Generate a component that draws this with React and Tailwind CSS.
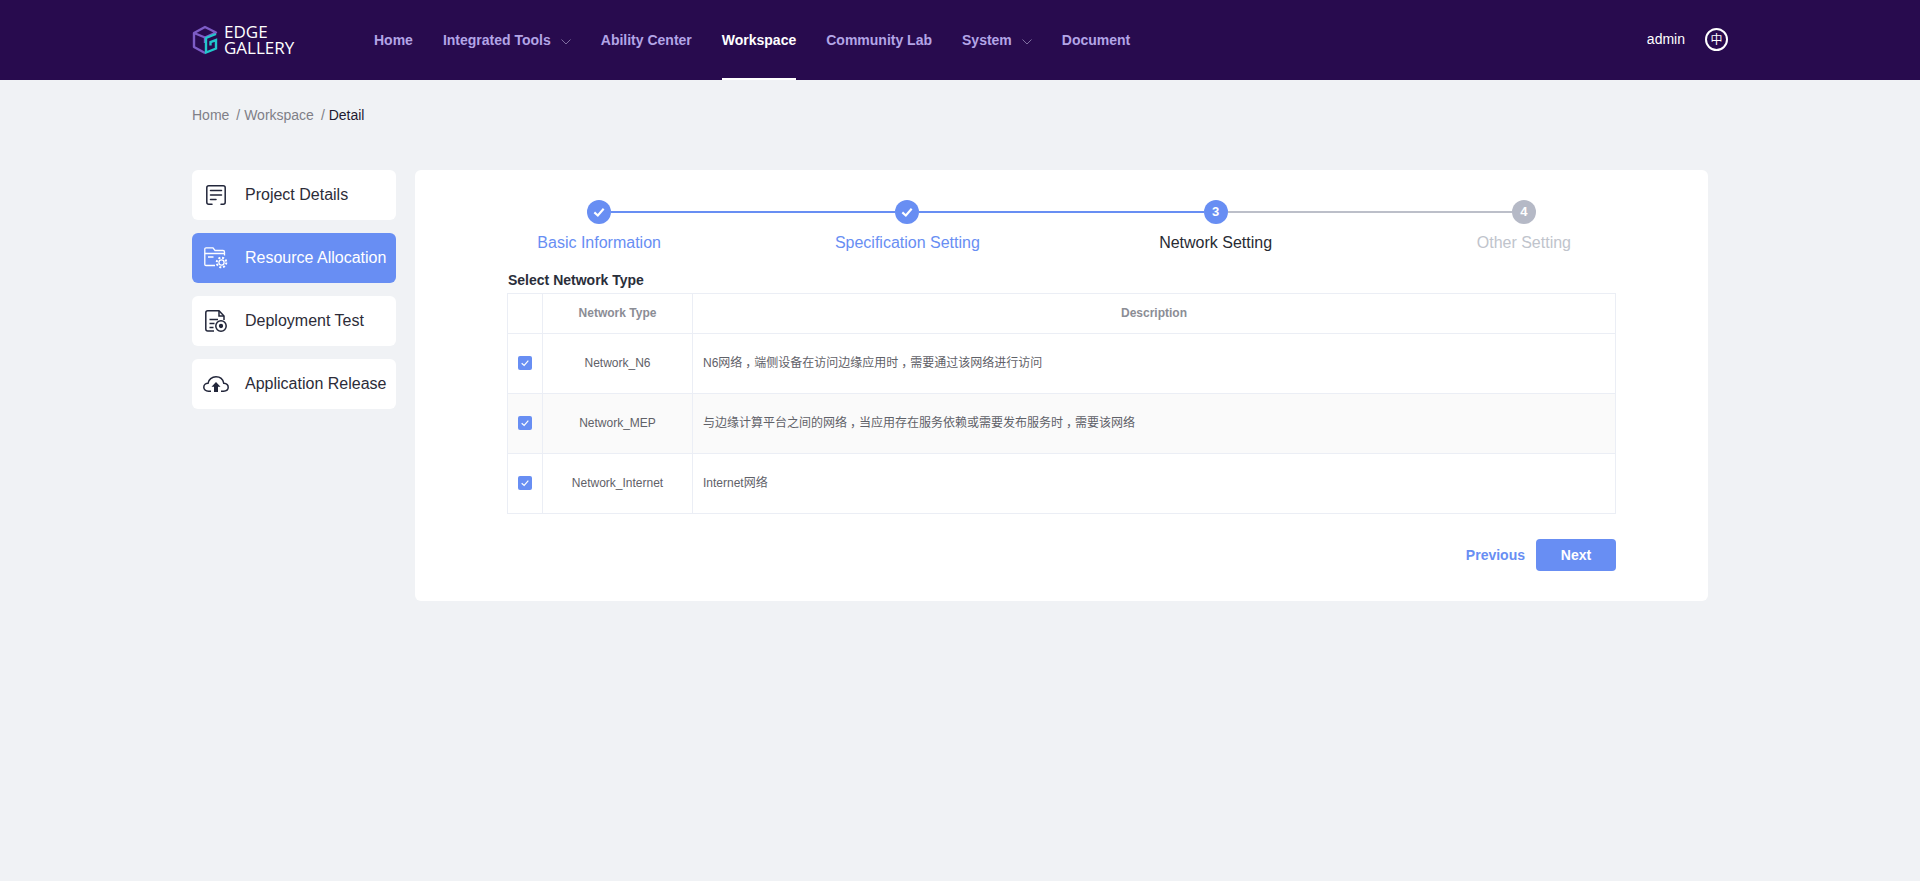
import React from "react";

const nav = [
  { t: "Home" },
  { t: "Integrated Tools", c: true },
  { t: "Ability Center" },
  { t: "Workspace", a: true },
  { t: "Community Lab" },
  { t: "System", c: true },
  { t: "Document" },
];

function Logo() {
  return (
    <svg width="26" height="30" viewBox="0 0 26 30" fill="none" className="shrink-0">
      <path d="M13 2 L24 7.5 L13 12.5 L2 8 Z M2 8 V22 L13 28" stroke="#7d5cc6" strokeWidth="2.4" strokeLinejoin="round" />
      <path d="M13 13 V18" stroke="#7d5cc6" strokeWidth="2.4" />
      <path d="M24 9 L14 13 V27.5 L24 23.5 V15 L18.5 17 V20.5" stroke="#22c7cb" strokeWidth="2.4" />
    </svg>
  );
}

function Chevron() {
  return (
    <svg width="10" height="6" viewBox="0 0 10 6" fill="none" className="ml-[10px] mt-[2px]">
      <path d="M0.5 0.5 L5 5 L9.5 0.5" stroke="#7f6f9f" strokeWidth="1" />
    </svg>
  );
}

function IconDetails({ c }) {
  return (
    <svg width="20" height="20" viewBox="0 0 20 20" fill="none" stroke={c} strokeWidth="1.5" strokeLinecap="round">
      <path d="M6 19.2 H2.8 Q0.8 19.2 0.8 17.2 V2.8 Q0.8 0.8 2.8 0.8 H17.2 Q19.2 0.8 19.2 2.8 V17.2 Q19.2 19.2 17.2 19.2 H15" />
      <path d="M4.5 5.5 H15.5 M4.5 10 H15.5 M4.5 14.5 H10" />
    </svg>
  );
}

function IconFolder({ c }) {
  return (
    <svg width="24" height="22" viewBox="0 0 24 22" fill="none" stroke={c} strokeWidth="1.3">
      <path d="M11 18.5 H2 Q0.8 18.5 0.8 17.3 V1.8 Q0.8 0.8 2 0.8 H9 L11 3.5 H19 Q20.5 3.5 20.5 5 V8.5" />
      <path d="M0.8 6.5 H20.5 M4 10 H9.5" />
      <circle cx="17.5" cy="15.5" r="2.6" />
      <circle cx="17.5" cy="15.5" r="4.8" strokeWidth="2" strokeDasharray="2 1.77" />
    </svg>
  );
}

function IconTest({ c }) {
  return (
    <svg width="22" height="22" viewBox="0 0 22 22" fill="none" stroke={c} strokeWidth="1.5">
      <path d="M9 21 H2.8 Q0.8 21 0.8 19 V2.8 Q0.8 0.8 2.8 0.8 H14 L19 6 V10" />
      <path d="M14 1 V6 H19" />
      <path d="M4.5 9.5 H13 M4.5 13.5 H9.5 M4.5 17.5 H8.5" />
      <circle cx="16" cy="16" r="5.2" />
      <circle cx="16" cy="16" r="1.4" fill={c} />
    </svg>
  );
}

function IconCloud({ c }) {
  return (
    <svg width="26" height="16" viewBox="0 0 26 16" fill="none" stroke={c} strokeWidth="1.5">
      <path d="M8 15.2 H5.5 C2.5 15.2 0.8 13.2 0.8 11.2 C0.8 8.8 2.8 7.3 5 7.3 C5.5 3.5 9 0.8 13 0.8 C17 0.8 20 3.5 20.8 7.3 C23.3 7.5 25.2 9 25.2 11.3 C25.2 13.5 23.3 15.2 20.5 15.2 H18" />
      <path d="M13 6 L17.5 10.8 H15 V16 H11 V10.8 H8.5 Z" fill={c} stroke="none" />
    </svg>
  );
}

const side = [
  { t: "Project Details", I: IconDetails },
  { t: "Resource Allocation", I: IconFolder, a: true },
  { t: "Deployment Test", I: IconTest },
  { t: "Application Release", I: IconCloud },
];

function Check({ w = 12, s = 1.6 }) {
  return (
    <svg width={w} height={w} viewBox="0 0 12 12" fill="none">
      <path d="M2 6.3 L5 9 L10 3.2" stroke="#fff" strokeWidth={s} />
    </svg>
  );
}

const steps = [
  { t: "Basic Information", s: "done" },
  { t: "Specification Setting", s: "done" },
  { t: "Network Setting", n: 3, s: "cur" },
  { t: "Other Setting", n: 4, s: "todo" },
];

const rows = [
  ["Network_N6", ["N6网络", "端侧设备在访问边缘应用时", "需要通过该网络进行访问"]],
  ["Network_MEP", ["与边缘计算平台之间的网络", "当应用存在服务依赖或需要发布服务时", "需要该网络"]],
  ["Network_Internet", ["Internet网络"]],
];

export default function App() {
  return (
    <div className="min-h-[881px] bg-[#f0f2f5] font-['Liberation_Sans','Noto_Sans_CJK_SC',sans-serif]">
      <header className="h-[80px] bg-[#280b4e] pl-[192px] pr-[192px] flex items-stretch">
        <div className="flex items-center w-[182px] shrink-0">
          <Logo />
          <div className="ml-[6px] text-white font-['Open_Sans',sans-serif] font-medium text-[17px] leading-[16px] mt-[-1px]">
            EDGE
            <br />
            GALLERY
          </div>
        </div>
        <nav className="flex items-stretch gap-[30px]">
          {nav.map((n) => (
            <div
              key={n.t}
              className={`flex items-center text-[14px] font-bold pt-[3px] border-b-2 ${
                n.a ? "text-white border-white" : "text-[#b3a5e6] border-transparent"
              }`}
            >
              {n.t}
              {n.c && <Chevron />}
            </div>
          ))}
        </nav>
        <div className="ml-auto flex items-center mb-[2px]">
          <span className="text-white text-[14px]">admin</span>
          <span className="ml-[20px] w-[23px] h-[23px] rounded-full border-2 border-white text-white flex items-center justify-center text-[12px] leading-none font-['Noto_Sans_CJK_SC',sans-serif]">
            中
          </span>
        </div>
      </header>

      <div className="pl-[192px] h-[90px] pt-[26px] text-[14px] leading-[18px] text-[#7f7f87]">
        Home<span className="ml-[7px]">/ Workspace</span>
        <span className="ml-[7px]">/ </span>
        <span className="text-[#1f1a30]">Detail</span>
      </div>

      <div className="pl-[192px] flex items-start">
        <aside className="w-[204px] shrink-0 flex flex-col gap-[13px]">
          {side.map(({ t, I, a }) => (
            <div
              key={t}
              className={`h-[50px] rounded-[6px] flex items-center text-[16px] ${
                a ? "bg-[#688ef3] text-white" : "bg-white text-[#2c2c38]"
              }`}
            >
              <span className="w-[53px] pr-[5px] shrink-0 flex justify-center">
                <I c={a ? "#ffffff" : "#22263a"} />
              </span>
              <span className="whitespace-nowrap">{t}</span>
            </div>
          ))}
        </aside>

        <main className="ml-[19px] w-[1293px] h-[431px] bg-white rounded-[6px] pt-[30px]">
          <div className="px-[30px] grid grid-cols-4">
            {steps.map((s, i) => (
              <div key={s.t} className="flex flex-col items-center">
                <div className="w-full flex items-center h-[24px]">
                  <div
                    className={`flex-1 h-[2px] ${
                      i === 0 ? "bg-transparent" : s.s === "todo" ? "bg-[#bcbfc9]" : "bg-[#688ef3]"
                    }`}
                  />
                  <div
                    className={`w-[24px] h-[24px] rounded-full flex items-center justify-center text-white text-[13px] font-bold ${
                      s.s === "todo" ? "bg-[#b5b9c6]" : "bg-[#688ef3]"
                    }`}
                  >
                    {s.s === "done" ? <Check w={14} s={1.8} /> : s.n}
                  </div>
                  <div
                    className={`flex-1 h-[2px] ${
                      i === 3 ? "bg-transparent" : s.s === "done" ? "bg-[#688ef3]" : "bg-[#bcbfc9]"
                    }`}
                  />
                </div>
                <div
                  className={`mt-[9px] text-[16px] leading-[20px] ${
                    s.s === "done" ? "text-[#688ef3]" : s.s === "cur" ? "text-[#282b33]" : "text-[#c0c4cc]"
                  }`}
                >
                  {s.t}
                </div>
              </div>
            ))}
          </div>

          <div className="mx-[92px] mt-[18px]">
            <div className="text-[14px] leading-[18px] font-bold text-[#2a2e3a] h-[22px] pl-[1px]">Select Network Type</div>
            <div className="border border-[#ebeef5] border-b-0 w-[1109px]">
              <div className="flex h-[40px] border-b border-[#ebeef5] text-[12px] font-bold text-[#8b8d95]">
                <div className="w-[35px] border-r border-[#ebeef5]" />
                <div className="w-[150px] border-r border-[#ebeef5] flex items-center justify-center pb-[1px]">Network Type</div>
                <div className="flex-1 flex items-center justify-center pb-[1px]">Description</div>
              </div>
              {rows.map((r, i) => (
                <div
                  key={r[0]}
                  className={`flex h-[60px] border-b border-[#ebeef5] text-[12px] text-[#5f6168] ${
                    i === 1 ? "bg-[#fafafa]" : ""
                  }`}
                >
                  <div className="w-[35px] border-r border-[#ebeef5] flex items-center justify-center pb-[1px]">
                    <span className="w-[14px] h-[14px] rounded-[2px] bg-[#688ef3] flex items-center justify-center">
                      <Check w={10} s={1.4} />
                    </span>
                  </div>
                  <div className="w-[150px] border-r border-[#ebeef5] flex items-center justify-center pb-[1px]">{r[0]}</div>
                  <div className="flex-1 flex items-center pl-[10px] pb-[1px]">
                    <span>
                      {r[1].map((part, k) => (
                        <React.Fragment key={k}>
                          {k > 0 && <span className="inline-block w-[12px] pl-[3px]">，</span>}
                          {part}
                        </React.Fragment>
                      ))}
                    </span>
                  </div>
                </div>
              ))}
            </div>
            <div className="flex items-center justify-end mt-[25px]">
              <span className="text-[14px] font-bold text-[#688ef3]">Previous</span>
              <span className="ml-[11px] w-[80px] h-[32px] rounded-[4px] bg-[#688ef3] text-white text-[14px] font-bold flex items-center justify-center">
                Next
              </span>
            </div>
          </div>
        </main>
      </div>
    </div>
  );
}
